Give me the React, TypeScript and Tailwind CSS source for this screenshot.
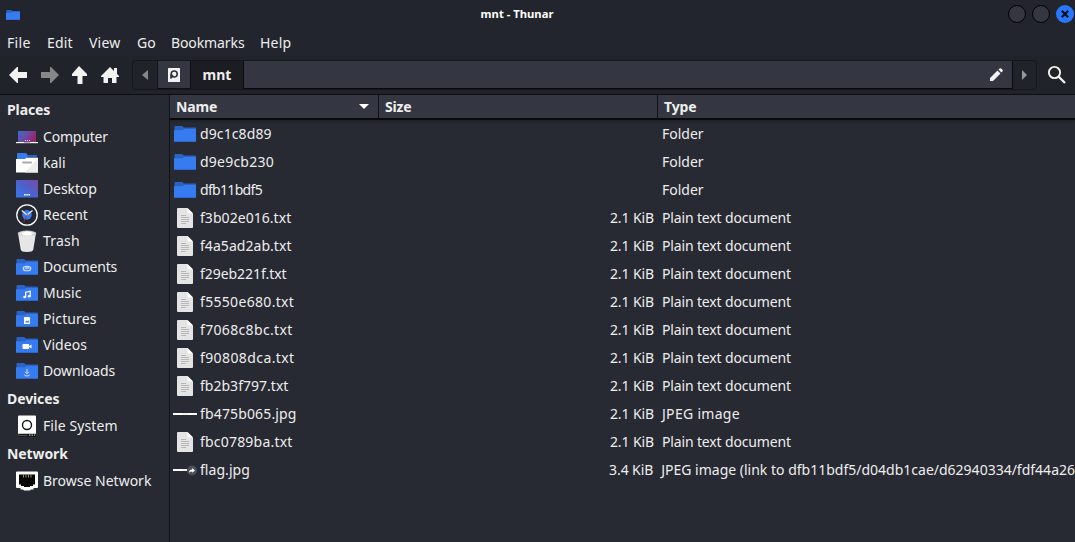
import React from "react";

type IconProps = { kind: string };

function Folder({ children, w = 22, h = 16 }: { children?: React.ReactNode; w?: number; h?: number }) {
  return (
    <svg width={w} height={h} viewBox="0 0 22 16" preserveAspectRatio="none">
      <path d="M0.5 0.8Q0.5 0 1.3 0H8l2 1.6h11.2q.8 0 .8.8V8H.5z" fill="#2a62c6" />
      <path d="M0 4.2h8.5L10.5 3H22v12q0 1-1 1H1q-1 0-1-1z" fill="#367bf0" />
      <path d="M.5 15.5h21" stroke="#2a62c6" strokeWidth="0.8" />
      {children}
    </svg>
  );
}

function PlaceIcon({ kind }: IconProps) {
  switch (kind) {
    case "computer":
      return (
        <svg width="22" height="22" viewBox="0 0 22 22">
          <defs>
            <linearGradient id="pc" x1="0" y1="0" x2="1" y2="0.4">
              <stop offset="0" stopColor="#3f68cf" />
              <stop offset="0.55" stopColor="#6a4aa6" />
              <stop offset="1" stopColor="#97276d" />
            </linearGradient>
          </defs>
          <rect x="2" y="5" width="18" height="11" fill="url(#pc)" />
          <path d="M9 14.5h1M11 14.5h1M13 14.5h1" stroke="#e6dff5" strokeWidth="0.9" />
          <path d="M0 16h22v1.2H0z" fill="#fff" />
          <path d="M8 16h6v.8H8z" fill="#999" />
        </svg>
      );
    case "home":
      return (
        <svg width="22" height="22" viewBox="0 0 22 22">
          <path d="M1 1.8Q1 1 2 1h8l2 2.3h9V8H1z" fill="#367bf0" />
          <path d="M11 4h10v2H11z" fill="#2458b5" />
          <path d="M0 7h9l1.5-1.3H22V20.5H0z" fill="#fff" />
          <path d="M22 6v14.500H9z" fill="#ededed" />
          <rect x="6" y="9.500" width="10" height="2" rx="1" fill="#aaa" />
        </svg>
      );
    case "desktop":
      return (
        <svg width="22" height="22" viewBox="0 0 22 22">
          <defs>
            <linearGradient id="dk" x1="0" y1="1" x2="1" y2="0">
              <stop offset="0" stopColor="#3478ed" />
              <stop offset="0.5" stopColor="#4c62cd" />
              <stop offset="1" stopColor="#7a49a4" />
            </linearGradient>
          </defs>
          <rect x="0" y="2" width="22" height="17.500" rx="0.6" fill="url(#dk)" />
          <path d="M8 16h1.600v1.500H8zM10.300 16h1.500v1.500h-1.500zM12.500 16H14v1.500h-1.500z" fill="#fff" />
        </svg>
      );
    case "recent":
      return (
        <svg width="22" height="22" viewBox="0 0 22 22">
          <circle cx="11" cy="11" r="10.200" fill="#252730" stroke="#fff" strokeWidth="1.300" />
          <circle cx="11" cy="10.800" r="4.800" fill="#367bf0" />
          <path d="M5.800 6.500 11 11l5.500-4.500" fill="none" stroke="#e9eef8" strokeWidth="1.300" />
          <path d="M11.500 10 8 17.500" stroke="#b52d3a" strokeWidth="0.900" />
        </svg>
      );
    case "trash":
      return (
        <svg width="22" height="22" viewBox="0 0 22 22">
          <path d="M2 3h18l-2.700 16.500Q17 22 11 22t-6.300-2.500z" fill="#e6e6e6" />
          <ellipse cx="11" cy="3.300" rx="9.300" ry="2.700" fill="#d2d2cf" />
          <path d="M4 4q1.500-2.200 4-1.600 3-2.200 5.500-.4 3-.6 4.500 2-3 1.800-7 1.800T4 4z" fill="#fff" />
          <path d="M5 3.700l1.500 1" stroke="#dfc467" />
          <path d="M16 3.500l1 1" stroke="#43afb5" />
        </svg>
      );
    case "documents":
      return (
        <Folder>
          <ellipse cx="11" cy="9.500" rx="3.800" ry="2.300" fill="none" stroke="#d7e5fd" strokeWidth="1.100" />
          <path d="M8.500 9.700h4.200q1-.9 0-1.200H9.500" fill="none" stroke="#d7e5fd" strokeWidth="0.800" />
        </Folder>
      );
    case "music":
      return (
        <Folder>
          <path d="M9.700 12V7.200l4.500-1v4.900" fill="none" stroke="#fff" strokeWidth="1.200" />
          <ellipse cx="8.700" cy="12" rx="1.500" ry="1.200" fill="#fff" />
          <ellipse cx="13.200" cy="11.200" rx="1.500" ry="1.200" fill="#fff" />
        </Folder>
      );
    case "pictures":
      return (
        <Folder>
          <rect x="8" y="6" width="6" height="7" rx="0.500" fill="#fff" />
          <path d="M9.200 11.500l1.200-2 1 1 1-1.500 1 2.500z" fill="#367bf0" />
        </Folder>
      );
    case "videos":
      return (
        <Folder>
          <rect x="6.500" y="7" width="6.600" height="5" rx="0.700" fill="#fff" />
          <path d="M12.500 9.500l3-2v4z" fill="#fff" />
        </Folder>
      );
    case "downloads":
      return (
        <Folder>
          <path d="M11 6v4.500M9 8.800l2 2 2-2M8.300 11.500q.3 1.500 2.700 1.500t2.700-1.500" fill="none" stroke="#d7e5fd" strokeWidth="1" />
        </Folder>
      );
    case "disk":
      return (
        <svg width="22" height="22" viewBox="0 0 22 22">
          <rect x="2" y="0.500" width="18" height="19" rx="1" fill="#fff" />
          <circle cx="11" cy="10" r="4.500" fill="#fff" stroke="#15161b" strokeWidth="1.400" />
          <path d="M2.500 18.800h17l.5 2.700H2z" fill="#0e0f12" />
          <path d="M2 19.800h9.500V21H2z" fill="#4c4c4c" />
          <path d="M13 20.200h1.500M15.500 20.200H17M18 20.200h1" stroke="#bbb" strokeWidth="1.200" />
        </svg>
      );
    default:
      return (
        <svg width="22" height="22" viewBox="0 0 22 22">
          <path d="M1 1.500h20q1 0 1 1V17q0 1-1 1h-3.500v1.500H15L14 20.500H8l-1-1H4.500V18H1q-1 0-1-1V2.500q0-1 1-1z" fill="#fff" />
          <path d="M3 4.500h16v10h-2V16h-3v1H8v-1H5v-1.500H3z" fill="#070708" />
          <path d="M7.500 4.500v3M10 4.500v3M12.500 4.500v3M15 4.500v3" stroke="#a28b50" strokeWidth="1" />
        </svg>
      );
  }
}

function FileIcon({ kind }: IconProps) {
  if (kind === "folder") return <Folder />;
  if (kind === "text")
    return (
      <svg width="16" height="20" viewBox="0 0 16 20">
        <path d="M1 0h9.500L16 5.500V19q0 1-1 1H1q-1 0-1-1V1q0-1 1-1z" fill="#e4e4e4" />
        <path d="M10.500 0 16 5.500h-4.500q-1 0-1-1z" fill="#fff" />
        <path d="M4 7.500h5M4 9.500h8M4 11.500h8M4 13.500h8M4 15.500h5" stroke="#b2b2b2" strokeWidth="0.900" />
      </svg>
    );
  return (
    <svg width="24" height="12" viewBox="0 0 24 12">
      <path d="M0 5h24v2H0z" fill="#fff" />
      <path d="M9 6h6" stroke="#d9d9d9" strokeWidth="0.700" />
      {kind === "link" && (
        <g>
          <path d="M14 4h10v4H14z" fill="#272933" />
          <circle cx="19" cy="6.500" r="5" fill="#4c4e58" />
          <path d="M16 8.800q.3-3.300 3.200-3.300V4L22 6.500l-2.800 2.300V7.500q-2 0-3.200 1.300z" fill="#fff" />
        </g>
      )}
    </svg>
  );
}

const places = [
  ["computer", "Computer", "tracking-[-0.2px]"],
  ["home", "kali", ""],
  ["desktop", "Desktop", "tracking-[-0.1px]"],
  ["recent", "Recent", ""],
  ["trash", "Trash", "tracking-[0.2px]"],
  ["documents", "Documents", "tracking-[-0.15px]"],
  ["music", "Music", ""],
  ["pictures", "Pictures", "tracking-[0.12px]"],
  ["videos", "Videos", "tracking-[0.05px]"],
  ["downloads", "Downloads", "tracking-[-0.15px]"],
];

const txt = "Plain text document";
const files = [
  ["folder", "d9c1c8d89", "", "Folder", "tracking-[0.1px]"],
  ["folder", "d9e9cb230", "", "Folder", "tracking-[0.22px]"],
  ["folder", "dfb11bdf5", "", "Folder", "tracking-[-0.68px]"],
  ["text", "f3b02e016.txt", "2.1 KiB", txt, "tracking-[0.05px]"],
  ["text", "f4a5ad2ab.txt", "2.1 KiB", txt, "tracking-[0.05px]"],
  ["text", "f29eb221f.txt", "2.1 KiB", txt, "tracking-[-0.05px]"],
  ["text", "f5550e680.txt", "2.1 KiB", txt, "tracking-[0.32px]"],
  ["text", "f7068c8bc.txt", "2.1 KiB", txt, "tracking-[0.34px]"],
  ["text", "f90808dca.txt", "2.1 KiB", txt, "tracking-[0.4px]"],
  ["text", "fb2b3f797.txt", "2.1 KiB", txt, "tracking-[0.02px]"],
  ["image", "fb475b065.jpg", "2.1 KiB", "JPEG image", "tracking-[0.15px]"],
  ["text", "fbc0789ba.txt", "2.1 KiB", txt, "tracking-[0.2px]"],
  ["link", "flag.jpg", "3.4 KiB", "JPEG image (link to dfb11bdf5/d04db1cae/d62940334/fdf44a26", "tracking-[0.05px]"],
];

const typeTracking: Record<string, string> = {
  Folder: "",
  "Plain text document": "tracking-[-0.15px]",
  "JPEG image": "tracking-[0.3px]",
};

function Place({ kind, label, tracking = "" }: { kind: string; label: string; tracking?: string }) {
  return (
    <div className="flex h-[26px] items-center pl-4">
      <span className="flex w-[22px] justify-center">
        <PlaceIcon kind={kind} />
      </span>
      <span className={`ml-[5px] ${tracking}`}>{label}</span>
    </div>
  );
}

function Section({ label }: { label: string }) {
  return <div className="flex h-[29px] items-center pl-[7px] text-[14px] font-bold tracking-[-0.1px]">{label}</div>;
}

export default function App() {
  return (
    <div className="flex h-[542px] w-[1075px] flex-col overflow-hidden whitespace-nowrap bg-[#272933] font-['Noto_Sans',sans-serif] text-[14px] leading-5 text-[#eeeeec]">
      <header className="flex h-[29px] shrink-0 items-center bg-[#23252e]">
        <div className="w-[60px] pl-[6px]">
          <Folder w={14} h={10} />
        </div>
        <div className="flex-1 pr-[34px] pb-px text-center text-[11.25px] font-bold text-white">mnt - Thunar</div>
        <div className="flex w-[67px] gap-[6px] pb-px">
          <span className="size-[18px] rounded-full border border-black bg-[#343742]" />
          <span className="size-[18px] rounded-full border border-black bg-[#343742]" />
          <span className="flex size-[18px] items-center justify-center rounded-full bg-[#2777ff]">
            <svg width="8" height="8" viewBox="0 0 8 8">
              <path d="M.8.8l6.400 6.400M7.200.8.8 7.200" stroke="#0b1020" strokeWidth="2.200" />
            </svg>
          </span>
        </div>
      </header>

      <nav className="flex h-[27px] shrink-0 items-center bg-[#23252e] pl-[7px]">
        <span className="w-[40px] tracking-[0.3px]">File</span>
        <span className="w-[42px] tracking-[0.2px]">Edit</span>
        <span className="w-[48px] tracking-[0.2px]">View</span>
        <span className="w-[34px]">Go</span>
        <span className="w-[89px] tracking-[-0.1px]">Bookmarks</span>
        <span className="tracking-[0.2px]">Help</span>
      </nav>

      <div className="flex h-[39px] shrink-0 items-start border-b border-[#0d0e11] bg-[#21232b]">
        <div className="flex h-[37px] w-[132px] items-center gap-[12px] pl-2">
          <svg width="20" height="18" viewBox="0 0 20 18">
            <path d="M1 9l8-8h1v5h9v6h-9v5H9z" fill="#f2f2f0" />
          </svg>
          <svg width="20" height="18" viewBox="0 0 20 18">
            <path d="M19 9l-8-8h-1v5H1v6h9v5h1z" fill="#868788" />
          </svg>
          <svg width="16" height="20" viewBox="0 0 16 20">
            <path d="M7 1l8 8v2h-4.500v8h-5v-8H0V9z" fill="#f2f2f0" />
          </svg>
          <svg width="20" height="18" viewBox="0 0 20 18">
            <path d="M10 1l4 4V2h3v6l2 2v1h-2.500v6H12v-5H8v5H3.500v-6H1v-1z" fill="#f2f2f0" />
          </svg>
        </div>
        <div className="mt-1 flex h-[30px] w-[905px] overflow-hidden rounded-[4px] border border-[#15171c]">
          <div className="flex w-[25px] items-center justify-center border-r border-[#101216]">
            <svg width="6" height="10" viewBox="0 0 6 10">
              <path d="M6 0v10L0 5z" fill="#86878b" />
            </svg>
          </div>
          <div className="flex w-[33px] items-center justify-center border-r border-b border-[#0e0f12] bg-[#343742]">
            <svg width="12" height="14" viewBox="0 0 12 14">
              <rect width="12" height="14" rx="0.500" fill="#f2f2f0" />
              <circle cx="6.200" cy="6" r="3" fill="none" stroke="#30333d" strokeWidth="1.600" />
              <path d="M2.200 6.500h2l1.500 1.500-2.500 2.800h-1z" fill="#30333d" />
            </svg>
          </div>
          <div className="flex w-[52px] items-center justify-center bg-[#1b1d23] text-[14px] font-bold">mnt</div>
          <div className="flex flex-1 items-center justify-end border-r border-b border-l border-[#08090b] bg-[#343742] pr-[9px]">
            <svg width="13" height="13" viewBox="0 0 13 13">
              <path d="M0 13v-3l7.500-7.500 3 3L3 13zM8.500 1.600l1-1Q10.500-.2 11.500.7l.8.8q1 1 .1 2l-1 1z" fill="#f2f2f0" />
            </svg>
          </div>
          <div className="flex w-[23px] items-center justify-center">
            <svg width="6" height="10" viewBox="0 0 6 10">
              <path d="M0 0v10l5-5z" fill="#96979a" />
            </svg>
          </div>
        </div>
        <svg className="mt-[9px] ml-[10px]" width="20" height="20" viewBox="0 0 20 20">
          <circle cx="7.500" cy="7.500" r="5.600" fill="none" stroke="#f2f2f0" strokeWidth="1.900" />
          <path d="M11.500 11.500l6.500 6.500" stroke="#f2f2f0" strokeWidth="2.300" />
        </svg>
      </div>

      <main className="flex min-h-0 flex-1">
        <aside className="w-[170px] shrink-0 border-r border-[#101116]">
          <Section label="Places" />
          {places.map(([kind, label, tracking]) => (
            <Place key={label} kind={kind} label={label} tracking={tracking} />
          ))}
          <Section label="Devices" />
          <Place kind="disk" label="File System" tracking="tracking-[0.1px]" />
          <Section label="Network" />
          <Place kind="network" label="Browse Network" />
        </aside>
        <section className="w-[905px]">
          <div className="flex h-[25px] border-b-2 border-[#08090b] bg-[#343742] text-[14px] font-bold tracking-[-0.15px] shadow-[0_1px_2px_#1d1f26]">
            <div className="flex w-[209px] items-center justify-between border-r border-[#101116] pr-[9px] pl-[6px]">
              Name
              <svg width="10" height="6" viewBox="0 0 10 6">
                <path d="M0 0h10L5 5z" fill="#fff" />
              </svg>
            </div>
            <div className="flex w-[279px] items-center border-r border-[#101116] pl-[6px]">Size</div>
            <div className="flex flex-1 items-center pl-[6px]">Type</div>
          </div>
          {files.map(([kind, name, size, type, tracking]) => (
            <div key={name} className="flex h-7 items-center">
              <span className="ml-[3px] flex w-[24px] justify-center">
                <FileIcon kind={kind} />
              </span>
              <span className={`ml-[3px] w-[200px] ${tracking}`}>{name}</span>
              <span className="w-[254px] text-right tracking-[-0.1px]">{size}</span>
              <span className={`ml-[8px] ${typeTracking[type] ?? ""}`}>{type}</span>
            </div>
          ))}
        </section>
      </main>
    </div>
  );
}
